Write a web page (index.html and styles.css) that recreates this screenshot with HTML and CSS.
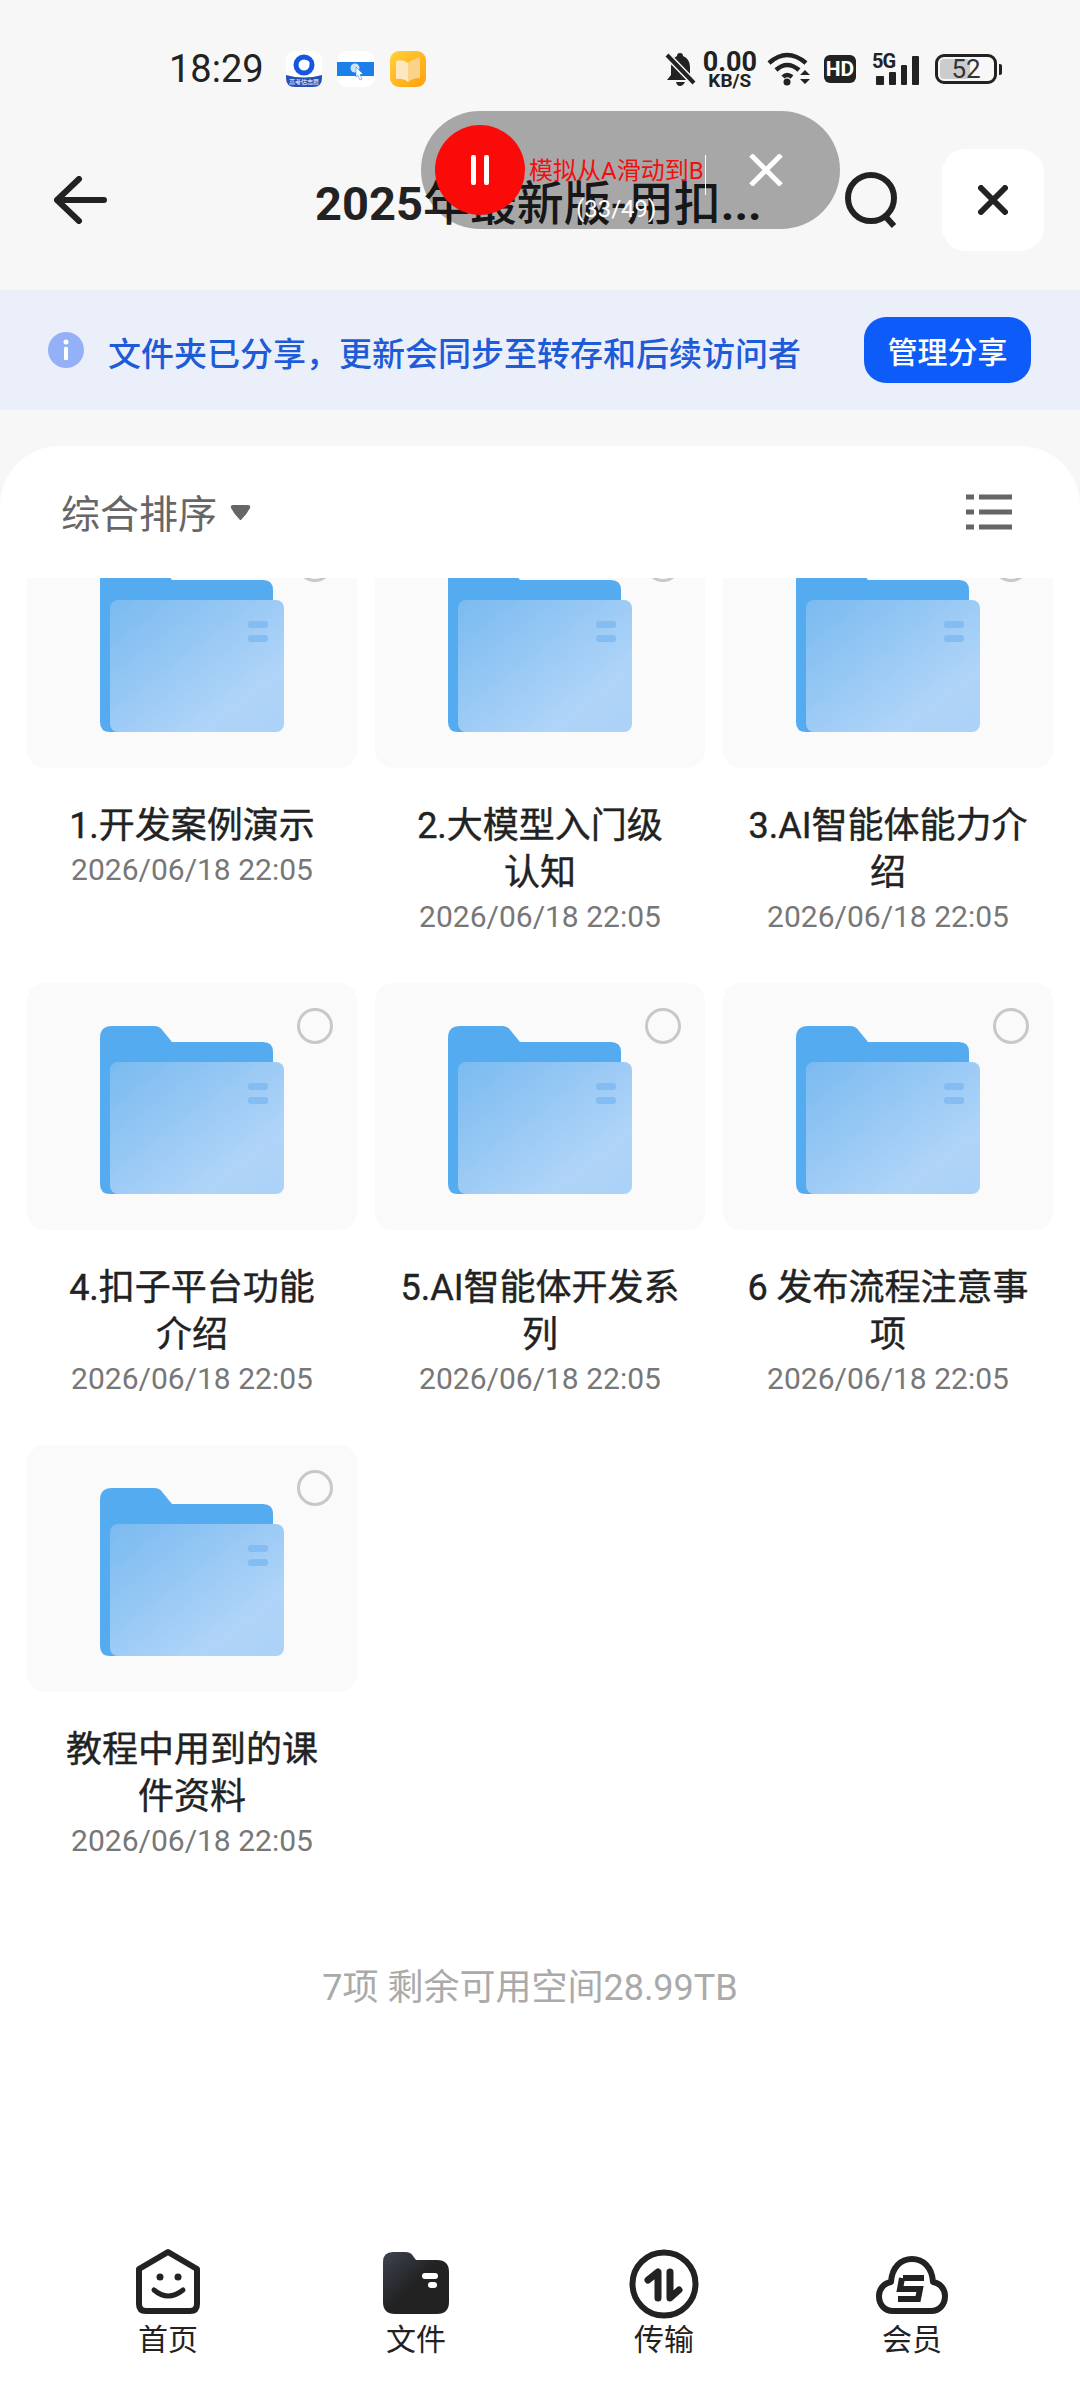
FILE: index.html
```html
<!DOCTYPE html>
<html lang="zh-CN">

<head>
  <meta charset="UTF-8">
  <meta name="viewport" content="width=device-width, initial-scale=1.0">
  <link rel="stylesheet" href="styles.css">
  <title>2025年最新版</title>
</head>

<body>
  <svg class="defs" width="0" height="0">
    <defs>
      <linearGradient id="front-grad" x1="0" y1="0" x2="1" y2="1">
        <stop offset="0" stop-color="#7abaf0" />
        <stop offset="0.75" stop-color="#afd4f8" />
        <stop offset="1" stop-color="#abd2f7" />
      </linearGradient>
      <linearGradient id="tab-grad" x1="0" y1="0" x2="1" y2="1">
        <stop offset="0" stop-color="#3d4450" />
        <stop offset="0.5" stop-color="#222" />
        <stop offset="1" stop-color="#222" />
      </linearGradient>
      <linearGradient id="book-grad" x1="0" y1="0" x2="1" y2="1">
        <stop offset="0" stop-color="#ffd23c" />
        <stop offset="1" stop-color="#ff9f0a" />
      </linearGradient>
      <symbol id="folder" viewBox="0 0 184 168">
        <path d="M0 12Q0 0 12 0H54Q60 0 63 5L72 16H163Q173 16 173 26V168H10Q0 168 0 158Z" fill="#55abf0" />
        <rect x="10" y="36" width="174" height="132" rx="8" fill="url(#front-grad)" />
        <rect x="148" y="57" width="20" height="7" rx="3" fill="#83bdf1" />
        <rect x="148" y="71" width="20" height="7" rx="3" fill="#83bdf1" />
      </symbol>
    </defs>
  </svg>

  <div class="status-bar">
    <span class="time">18:29</span>
    <div class="app-icons">
      <svg width="36" height="36" viewBox="0 0 36 36">
        <rect width="36" height="36" rx="9" fill="#fff" />
        <path d="M0 24Q18 29 36 24V27Q36 36 27 36H9Q0 36 0 27Z" fill="#2451b8" />
        <circle cx="18" cy="14" r="8" fill="none" stroke="#1556e0" stroke-width="5" />
        <circle cx="21" cy="12" r="2.5" fill="#fff" />
        <text class="app-text" x="18" y="33" text-anchor="middle">高考估志愿</text>
      </svg>
      <svg width="38" height="36" viewBox="0 0 38 36">
        <rect width="38" height="36" rx="10" fill="#fff" />
        <rect y="11" width="37" height="14" fill="#1a7fe8" />
        <circle cx="18" cy="17" r="4.5" fill="#cfe4fa" />
        <path d="M19 16L26 23L23 23.5L25 28L23 29L21 24.5L19 26Z" fill="#fff" stroke="#1a7fe8" stroke-width="0.5" />
      </svg>
      <svg width="36" height="36" viewBox="0 0 36 36">
        <rect width="36" height="36" rx="9" fill="url(#book-grad)" />
        <path d="M6 10Q13 8 18 12V31Q13 27 6 28Z" fill="#fde7c0" />
        <path d="M18 12Q23 8 30 6V27Q23 27 18 31Z" fill="#fbd28a" />
      </svg>
    </div>
    <div class="status-right">
      <svg class="bell" width="31" height="34" viewBox="0 0 31 34">
        <path d="M15 1Q18 1 18 4Q25 7 25 15V23L29 28H2L6 23V15Q6 7 12 4Q12 1 15 1ZM11 30H20Q18 34 15 34Q12 34 11 30Z" fill="#222" />
        <path d="M2 3L29 31" stroke="#f7f7f7" stroke-width="7" />
        <path d="M2 3L29 31" stroke="#222" stroke-width="4" />
      </svg>
      <div class="speed"><span class="speed-num">0.00</span><span class="speed-unit">KB/S</span></div>
      <svg width="44" height="34" viewBox="0 0 44 34">
        <path d="M2 11Q20 -5 39 11M9 18Q20 8 32 18M16 25Q20 21 25 25" fill="none" stroke="#222" stroke-width="4.5" />
        <circle cx="20" cy="30" r="3.5" fill="#222" />
        <path d="M33 23L38 18L43 23ZM33 27H43L38 32Z" fill="#222" />
      </svg>
      <span class="hd">HD</span>
      <div class="signal">
        <span class="five-g">5G</span>
        <svg width="43" height="29" viewBox="0 0 43 29">
          <rect x="0" y="20" width="8" height="9" rx="1" fill="#222" />
          <rect x="13" y="16" width="7" height="13" rx="1" fill="#222" />
          <rect x="25" y="9" width="6" height="20" rx="1" fill="#222" />
          <rect x="36" y="0" width="7" height="29" rx="1" fill="#222" />
        </svg>
      </div>
      <div class="battery">
        <div class="battery-body">
          <span class="battery-fill"></span>
          <span class="battery-num">52</span>
        </div>
        <span class="battery-nub"></span>
      </div>
    </div>
  </div>

  <div class="nav">
    <svg class="back" width="53" height="48" viewBox="0 0 53 48">
      <path d="M3 24H50M25 3L3 24L25 45" fill="none" stroke="#222" stroke-width="6" stroke-linecap="round" stroke-linejoin="round" />
    </svg>
    <h1 class="title"><b>2025</b>年最新版-用扣<b>...</b></h1>
    <svg class="search" width="56" height="56" viewBox="0 0 56 56">
      <circle cx="27" cy="26" r="23" fill="none" stroke="#222" stroke-width="6" />
      <path d="M41 44L50 54" stroke="#222" stroke-width="6" />
    </svg>
    <div class="close-btn">
      <svg width="30" height="30" viewBox="0 0 30 30">
        <path d="M3 3L27 27M27 3L3 27" stroke="#222" stroke-width="6" stroke-linecap="round" />
      </svg>
    </div>
  </div>

  <!-- gravador por cima do titulo -->
  <div class="recorder">
    <div class="rec-btn"><span></span><span></span></div>
    <span class="rec-text">模拟从A滑动到B</span>
    <span class="rec-line"></span>
    <svg class="rec-close" width="34" height="32" viewBox="0 0 34 32">
      <path d="M2 1L32 31M32 1L2 31" stroke="#fff" stroke-width="5" />
    </svg>
    <span class="rec-count">(33/49)</span>
  </div>

  <div class="banner">
    <svg width="36" height="36" viewBox="0 0 36 36">
      <circle cx="18" cy="18" r="18" fill="#94b1f7" />
      <circle cx="18" cy="10" r="2.5" fill="#fff" />
      <rect x="16" y="15" width="4" height="13" rx="1" fill="#fff" />
    </svg>
    <span class="banner-text">文件夹已分享，更新会同步至转存和后续访问者</span>
    <button class="banner-btn">管理分享</button>
  </div>

  <div class="sheet">
    <div class="sort-row">
      <span class="sort-label">综合排序</span>
      <svg class="sort-arrow" width="21" height="15" viewBox="0 0 21 15">
        <path d="M3 0H18Q21 0 20 3Q17 9 11 15Q10 15 10 15Q4 9 1 3Q0 0 3 0Z" fill="#666" />
      </svg>
      <svg class="list-icon" width="46" height="36" viewBox="0 0 46 36">
        <path d="M0 3H8M13 3H46M0 18H8M13 18H46M0 33H8M13 33H46" stroke="#666" stroke-width="5" />
      </svg>
    </div>

    <div class="list">
      <div class="grid">
        <div class="item">
          <div class="card"><svg class="folder" width="184" height="168"><use href="#folder" /></svg><span class="check"></span></div>
          <div class="name">1.开发案例演示</div>
          <div class="date">2026/06/18 22:05</div>
        </div>
        <div class="item">
          <div class="card"><svg class="folder" width="184" height="168"><use href="#folder" /></svg><span class="check"></span></div>
          <div class="name">2.大模型入门级<br>认知</div>
          <div class="date">2026/06/18 22:05</div>
        </div>
        <div class="item">
          <div class="card"><svg class="folder" width="184" height="168"><use href="#folder" /></svg><span class="check"></span></div>
          <div class="name">3.AI智能体能力介<br>绍</div>
          <div class="date">2026/06/18 22:05</div>
        </div>
        <div class="item">
          <div class="card"><svg class="folder" width="184" height="168"><use href="#folder" /></svg><span class="check"></span></div>
          <div class="name">4.扣子平台功能<br>介绍</div>
          <div class="date">2026/06/18 22:05</div>
        </div>
        <div class="item">
          <div class="card"><svg class="folder" width="184" height="168"><use href="#folder" /></svg><span class="check"></span></div>
          <div class="name">5.AI智能体开发系<br>列</div>
          <div class="date">2026/06/18 22:05</div>
        </div>
        <div class="item">
          <div class="card"><svg class="folder" width="184" height="168"><use href="#folder" /></svg><span class="check"></span></div>
          <div class="name">6 发布流程注意事<br>项</div>
          <div class="date">2026/06/18 22:05</div>
        </div>
        <div class="item">
          <div class="card"><svg class="folder" width="184" height="168"><use href="#folder" /></svg><span class="check"></span></div>
          <div class="name">教程中用到的课<br>件资料</div>
          <div class="date">2026/06/18 22:05</div>
        </div>
      </div>
      <div class="summary">7项 剩余可用空间28.99TB</div>
    </div>

    <div class="tabbar">
      <div class="tab">
        <svg width="66" height="74" viewBox="0 0 66 74">
          <path d="M33 7L62 24V59Q62 66 55 66H11Q4 66 4 59V24Z" fill="none" stroke="#222" stroke-width="6" stroke-linejoin="round" />
          <circle cx="25" cy="32" r="3.5" fill="#222" />
          <circle cx="43" cy="32" r="3.5" fill="#222" />
          <path d="M19 45Q33 57 48 45" fill="none" stroke="#222" stroke-width="5" stroke-linecap="round" />
        </svg>
        <span class="tab-label">首页</span>
      </div>
      <div class="tab">
        <svg width="66" height="74" viewBox="0 0 66 74">
          <path d="M0 17Q0 7 10 7H22Q28 7 30 11L33 15H54Q66 15 66 27V57Q66 69 54 69H12Q0 69 0 57Z" fill="url(#tab-grad)" />
          <rect x="39" y="28" width="16" height="6" rx="3" fill="#fff" />
          <rect x="45" y="37" width="9" height="6" rx="3" fill="#fff" />
        </svg>
        <span class="tab-label">文件</span>
      </div>
      <div class="tab">
        <svg width="70" height="74" viewBox="0 0 70 74">
          <circle cx="35" cy="39" r="31.5" fill="none" stroke="#222" stroke-width="6" />
          <path d="M19 35L29 27V53" fill="none" stroke="#222" stroke-width="7" stroke-linecap="round" stroke-linejoin="round" />
          <path d="M41 27V53L50 45" fill="none" stroke="#222" stroke-width="7" stroke-linecap="round" stroke-linejoin="round" />
        </svg>
        <span class="tab-label">传输</span>
      </div>
      <div class="tab">
        <svg width="72" height="74" viewBox="0 0 72 74">
          <path d="M17 66C8 66 3 59 3 51C3 43 9 38 15 37C16 22 25 14 36 14C47 14 56 22 57 37C63 38 69 43 69 51C69 59 64 66 55 66Z" fill="none" stroke="#222" stroke-width="6" stroke-linejoin="round" />
          <path d="M27 33H48M26 33L24 44H44L42 54H22" fill="none" stroke="#222" stroke-width="6" />
        </svg>
        <span class="tab-label">会员</span>
      </div>
    </div>
  </div>
</body>

</html>
```

FILE: styles.css
```css
body {
  font-family: Roboto, "Noto Sans CJK SC", sans-serif;
  background-color: #f7f7f7;
  color: #222;
  margin: 0;
  padding: 0;
  width: 1080px;
  height: 2400px;
  overflow: hidden;
  display: flex;
  flex-direction: column;
  position: relative;
}

.defs {
  position: absolute;
}

/* status bar */
.status-bar {
  height: 82px;
  padding: 28px 78px 0 169px;
  display: flex;
  align-items: center;
}

.time {
  font-size: 38px;
  width: 117px;
}

.app-icons {
  display: flex;
  align-items: center;
  gap: 15px;
}

.app-text {
  font-size: 6px;
  fill: #fff;
}

.status-right {
  margin-left: auto;
  display: flex;
  align-items: center;
}

.bell {
  margin-right: -3px;
}

.speed {
  display: flex;
  flex-direction: column;
  align-items: center;
  margin: 0 10px;
  color: #222;
  font-weight: 700;
}

.speed-num {
  font-size: 27px;
  line-height: 22px;
}

.speed-unit {
  font-size: 19px;
  line-height: 15px;
}

.hd {
  background-color: #222;
  color: #fff;
  font-size: 21px;
  font-weight: 700;
  border-radius: 6px;
  width: 32px;
  height: 28px;
  line-height: 28px;
  text-align: center;
  margin-left: 13px;
}

.signal {
  position: relative;
  margin-left: 20px;
  width: 43px;
  height: 31px;
  display: flex;
  align-items: flex-end;
}

.five-g {
  position: absolute;
  left: -4px;
  top: -2px;
  font-size: 20px;
  line-height: 18px;
  font-weight: 700;
  letter-spacing: -1px;
}

.battery {
  display: flex;
  align-items: center;
  margin-left: 16px;
}

.battery-body {
  width: 62px;
  height: 30px;
  box-sizing: border-box;
  border: 3px solid #222;
  border-radius: 9px;
  position: relative;
  text-align: center;
  font-size: 26px;
  line-height: 24px;
  overflow: hidden;
}

.battery-fill {
  position: absolute;
  left: 2px;
  top: 2px;
  bottom: 2px;
  width: 30px;
  background-color: #ccc;
  border-radius: 4px;
}

.battery-num {
  position: relative;
  color: #333;
}

.battery-nub {
  width: 3px;
  height: 11px;
  background-color: #222;
  margin-left: 2px;
  border-radius: 0 2px 2px 0;
}

/* header */
.nav {
  height: 180px;
  display: flex;
  align-items: center;
  position: relative;
}

.back {
  margin-left: 54px;
}

.title {
  margin: -2px 0 0 208px;
  font-size: 47px;
  font-weight: 500;
  white-space: nowrap;
}

.title b {
  font-weight: 700;
}

.search {
  position: absolute;
  left: 844px;
  top: 62px;
}

.close-btn {
  position: absolute;
  left: 942px;
  top: 39px;
  width: 102px;
  height: 102px;
  background-color: #fff;
  border-radius: 24px;
  display: flex;
  align-items: center;
  justify-content: center;
}

/* recorder overlay */
.recorder {
  position: absolute;
  left: 421px;
  top: 111px;
  width: 419px;
  height: 118px;
  border-radius: 59px;
  background-color: rgba(0, 0, 0, 0.32);
}

.rec-btn {
  position: absolute;
  left: 14px;
  top: 14px;
  width: 90px;
  height: 90px;
  border-radius: 50%;
  background-color: #fb0a0a;
  display: flex;
  align-items: center;
  justify-content: center;
  gap: 8px;
}

.rec-btn span {
  width: 5px;
  height: 30px;
  border-radius: 2px;
  background-color: #fff;
}

.rec-text {
  position: absolute;
  left: 108px;
  top: 44px;
  font-size: 24px;
  line-height: 32px;
  color: #f01010;
  white-space: nowrap;
}

.rec-line {
  position: absolute;
  left: 284px;
  top: 44px;
  width: 1px;
  height: 40px;
  background-color: #fff;
}

.rec-close {
  position: absolute;
  left: 328px;
  top: 43px;
}

.rec-count {
  position: absolute;
  left: 155px;
  top: 82px;
  font-size: 24px;
  line-height: 32px;
  color: #fff;
}

/* banner */
.banner {
  height: 120px;
  background-color: #ebeff9;
  display: flex;
  align-items: center;
  padding: 0 49px 0 48px;
}

.banner-text {
  margin-left: 24px;
  margin-top: 4px;
  font-size: 33px;
  font-weight: 500;
  color: #1d5bd8;
  white-space: nowrap;
}

.banner-btn {
  margin-left: auto;
  width: 167px;
  height: 66px;
  margin-top: 0;
  border: none;
  border-radius: 22px;
  background-color: #0d5bf8;
  color: #fff;
  font-family: inherit;
  font-size: 30px;
  font-weight: 500;
  padding: 0;
}

/* sheet */
.sheet {
  flex: 1;
  min-height: 0;
  margin-top: 36px;
  background-color: #fff;
  border-radius: 60px 60px 0 0;
  display: flex;
  flex-direction: column;
}

.sort-row {
  height: 132px;
  flex-shrink: 0;
  padding: 0 68px 0 61px;
  display: flex;
  align-items: center;
}

.sort-label {
  font-size: 39px;
  color: #666;
  margin-top: -3px;
}

.sort-arrow {
  margin-left: 13px;
}

.list-icon {
  margin-left: auto;
}

.list {
  flex: 1;
  min-height: 0;
  overflow: hidden;
}

.grid {
  margin-top: -57px;
  padding: 0 27px;
  display: grid;
  grid-template-columns: repeat(3, 330px);
  column-gap: 18px;
  row-gap: 46px;
  align-content: start;
}

.item {
  height: 416px;
  text-align: center;
}

.card {
  height: 247px;
  background-color: #fafafa;
  border-radius: 18px;
  position: relative;
  display: flex;
  align-items: center;
  justify-content: center;
}

.folder {
  margin-top: 6px;
}

.check {
  position: absolute;
  left: 270px;
  top: 25px;
  width: 36px;
  height: 36px;
  box-sizing: border-box;
  border: 3px solid #c8c8c8;
  border-radius: 50%;
}

.name {
  margin: 35px 0 0;
  font-size: 36px;
  line-height: 47px;
  color: #222;
  -webkit-text-stroke: 0.4px #222;
}

.date {
  font-size: 30px;
  line-height: 40px;
  color: #777;
}

.summary {
  margin-top: 102px;
  padding-right: 20px;
  text-align: center;
  font-size: 36px;
  line-height: 50px;
  color: #aaa;
}

/* bottom tabs */
.tabbar {
  flex-shrink: 0;
  height: 155px;
  padding: 0 44px;
  display: flex;
}

.tab {
  width: 248px;
  display: flex;
  flex-direction: column;
  align-items: center;
}

.tab-label {
  margin-top: 1px;
  font-size: 30px;
  line-height: 40px;
  color: #222;
}
```
